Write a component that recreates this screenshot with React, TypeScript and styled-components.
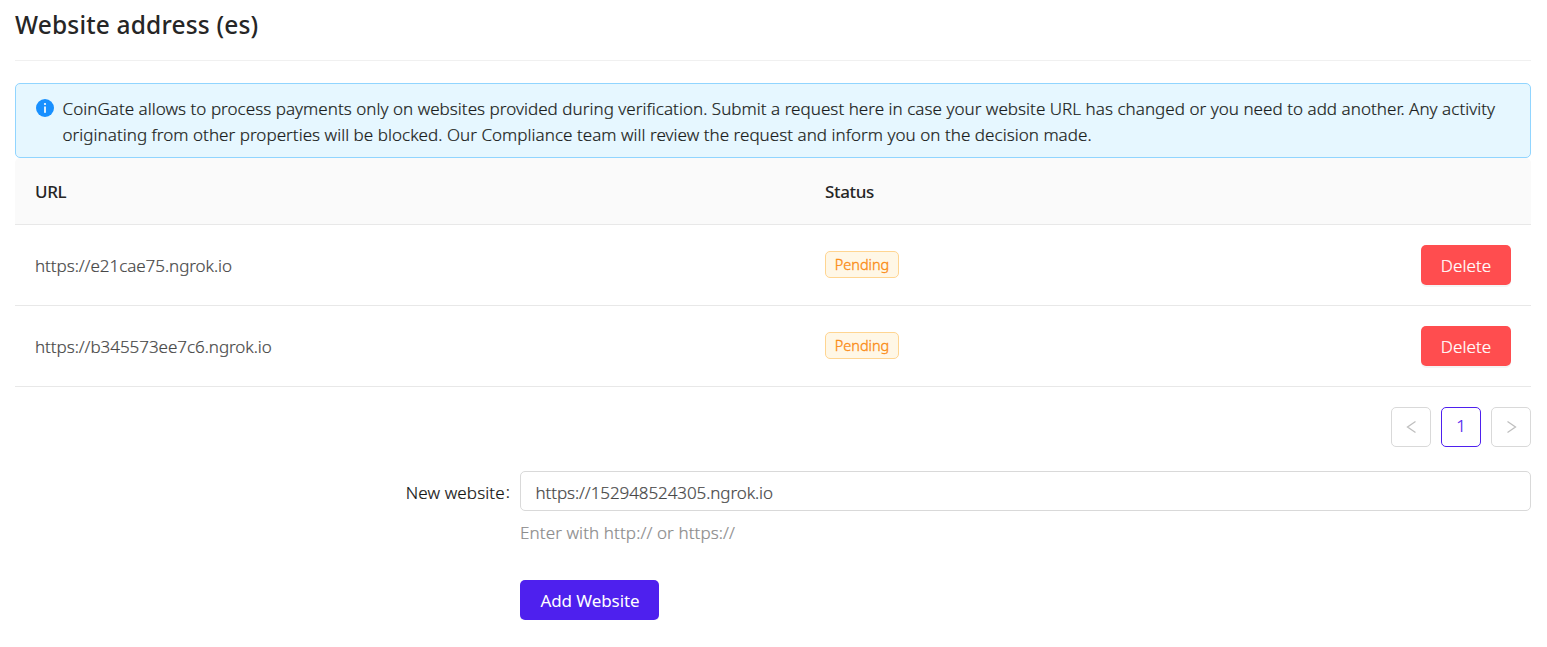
import React from "react";
import styled, { createGlobalStyle } from "styled-components";

const GlobalStyle = createGlobalStyle`
  *, *::before, *::after { box-sizing: border-box; }
  body {
    margin: 0;
    background: #fff;
    color: #262626;
    font: 300 17px/26px "Noto Sans", "Open Sans", sans-serif;
    -webkit-text-stroke: 0.2px currentColor;
  }
`;

const Page = styled.main`
  width: 1516px;
  margin-left: 15px;
`;

const Title = styled.h1`
  margin: 0;
  height: 61px;
  padding-top: 6px;
  border-bottom: 1px solid #f0f0f0;
  font-size: 24.5px;
  line-height: 38px;
  font-weight: 500;
  letter-spacing: 0.17px;
  -webkit-text-stroke: 0;
`;

const Notice = styled.section`
  display: flex;
  margin-top: 22px;
  height: 75px;
  padding: 11px 19px;
  border: 1px solid #91d5ff;
  border-radius: 5px;
  background: #e6f7ff;
`;

const InfoIcon = styled.svg`
  flex: none;
  width: 20px;
  height: 20px;
  margin: 3px 7.5px 0 0;
`;

const NoticeText = styled.p`
  margin: 0;
  padding-top: 1px;
  white-space: nowrap;
  letter-spacing: 0.043px;
  color: #1a1d20;
`;

const Columns = styled.div`
  display: grid;
  grid-template-columns: 790px 1fr auto;
  align-items: center;
  padding: 0 20px;
  border-bottom: 1px solid #e8e8e8;
`;

const TableHead = styled(Columns)`
  height: 67px;
  padding-top: 2px;
  background: #fafafa;
  border-radius: 5px 5px 0 0;
  font-weight: 500;
  letter-spacing: -0.35px;
  -webkit-text-stroke: 0;
`;

const TableRow = styled(Columns)`
  height: 81px;
`;

const Url = styled.span`
  color: #484848;
  padding-top: 1px;
  letter-spacing: -0.04px;
`;

const Tag = styled.span`
  justify-self: start;
  display: inline-flex;
  justify-content: center;
  align-items: center;
  width: 74px;
  height: 27px;
  margin-bottom: 1px;
  border: 1px solid #ffd591;
  border-radius: 5px;
  background: #fff7e6;
  color: #fa8c16;
  font-size: 14.5px;
  line-height: 25px;
  -webkit-text-stroke-width: 0.35px;
`;

const Button = styled.button<{ $color: string; $width: number }>`
  display: flex;
  justify-content: center;
  align-items: center;
  width: ${(p) => p.$width}px;
  height: 40px;
  padding: 2px 0 0;
  border: 0;
  border-radius: 5px;
  background: ${(p) => p.$color};
  box-shadow: 0 2px 0 rgba(0, 0, 0, 0.045);
  color: #fff;
  font: inherit;
  letter-spacing: 0.05px;
`;

const AddButton = styled(Button)`
  padding-left: 1px;
  font-weight: 400;
  letter-spacing: -0.08px;
  -webkit-text-stroke: 0;
`;

const Pagination = styled.nav`
  display: flex;
  justify-content: flex-end;
  gap: 10px;
  margin-top: 20px;
`;

const PageButton = styled.button<{ $active?: boolean }>`
  display: flex;
  justify-content: center;
  align-items: center;
  width: 40px;
  height: 40px;
  padding: 0 0 2px;
  border: 1px solid ${(p) => (p.$active ? "#4e20ee" : "#d9d9d9")};
  border-radius: 5px;
  background: #fff;
  color: ${(p) => (p.$active ? "#4e20ee" : "#bfbfbf")};
  font: inherit;

  svg {
    position: relative;
    top: 1px;
  }
`;

const Form = styled.form`
  display: grid;
  grid-template-columns: 495px 1011px;
  column-gap: 10px;
  margin-top: 24px;
`;

const Label = styled.label`
  justify-self: end;
  line-height: 44px;
  letter-spacing: 0.12px;
  color: #141414;
`;

const Colon = styled.span`
  margin-left: 1px;
  position: relative;
  top: -1px;
`;

const Field = styled.div`
  grid-column: 2;
`;

const Input = styled.input`
  display: block;
  width: 100%;
  height: 40px;
  padding: 2px 14.5px 0;
  border: 1px solid #d9d9d9;
  border-radius: 5px;
  outline: 0;
  background: #fff;
  color: #484848;
  font: inherit;
  letter-spacing: -0.08px;
`;

const Help = styled.p`
  margin: 9px 0 34px;
  color: #8c8c8c;
  letter-spacing: 0.11px;
`;

const rows = ["https://e21cae75.ngrok.io", "https://b345573ee7c6.ngrok.io"];

function Chevron({ direction }: { direction: "left" | "right" }) {
  const d = direction === "left" ? "M9.5 1.5 1.5 7l8 5.5" : "M1.5 1.5 9.5 7l-8 5.5";
  return (
    <svg width="11" height="14" viewBox="0 0 11 14" fill="none" stroke="currentColor" strokeWidth="1.3">
      <path d={d} />
    </svg>
  );
}

export default function App() {
  return (
    <>
      <GlobalStyle />
      <Page>
        <Title>Website address (es)</Title>
        <Notice>
          <InfoIcon viewBox="0 0 20 20">
            <circle cx="10" cy="10" r="9" fill="#1890ff" />
            <rect x="9.15" y="8.5" width="1.7" height="6.3" fill="#fff" />
            <circle cx="10" cy="6" r="1.1" fill="#fff" />
          </InfoIcon>
          <NoticeText>
            CoinGate allows to process payments only on websites provided during verification. Submit a request here in
            case your website URL has changed or you need to add another. Any activity
            <br />
            originating from other properties will be blocked. Our Compliance team will review the request and inform
            you on the decision made.
          </NoticeText>
        </Notice>
        <TableHead>
          <span>URL</span>
          <span>Status</span>
        </TableHead>
        {rows.map((url) => (
          <TableRow key={url}>
            <Url>{url}</Url>
            <Tag>Pending</Tag>
            <Button $color="#ff4d4f" $width={90}>
              Delete
            </Button>
          </TableRow>
        ))}
        <Pagination>
          <PageButton aria-label="Previous page">
            <Chevron direction="left" />
          </PageButton>
          <PageButton $active>1</PageButton>
          <PageButton aria-label="Next page">
            <Chevron direction="right" />
          </PageButton>
        </Pagination>
        <Form>
          <Label htmlFor="website">
            New website<Colon>:</Colon>
          </Label>
          <Field>
            <Input id="website" defaultValue="https://152948524305.ngrok.io" />
            <Help>Enter with http:// or https://</Help>
            <AddButton type="button" $color="#4e20ee" $width={139}>
              Add Website
            </AddButton>
          </Field>
        </Form>
      </Page>
    </>
  );
}
